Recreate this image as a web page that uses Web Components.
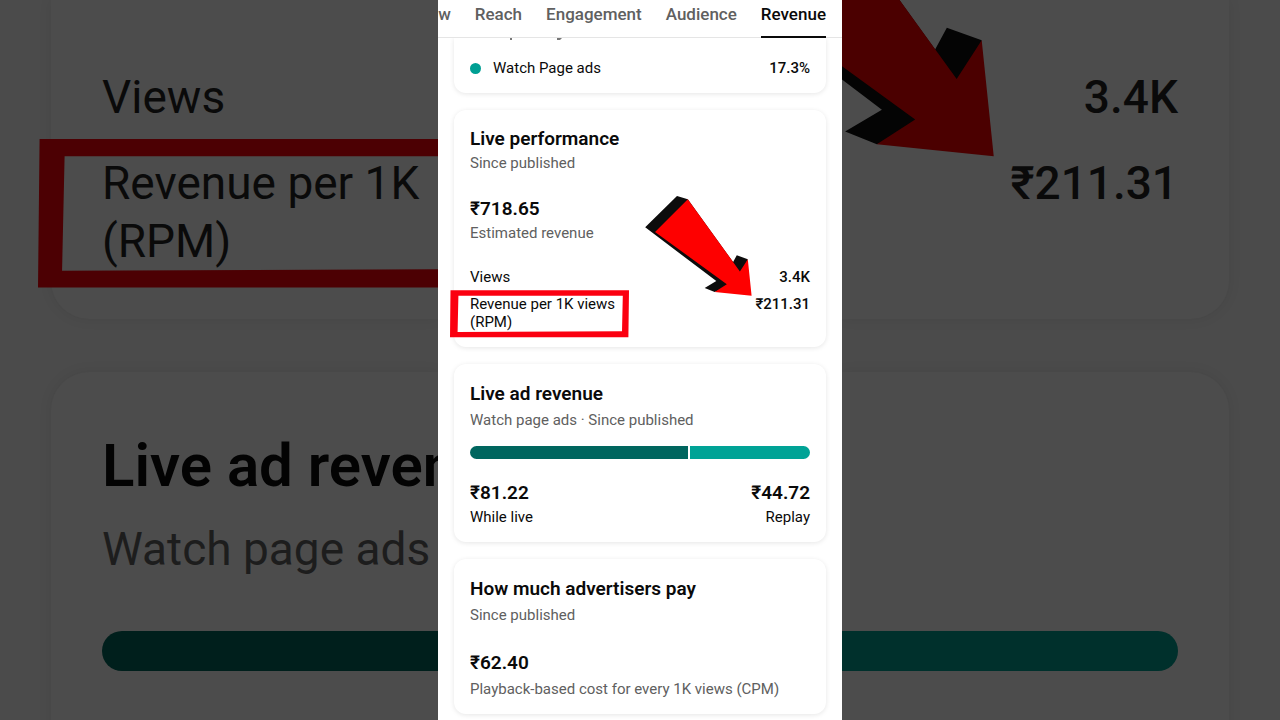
<!DOCTYPE html>
<html lang="en">
<head>
<meta charset="utf-8">
<meta name="viewport" content="width=device-width, initial-scale=1">
<title>Revenue analytics</title>
<style>
  html, body { margin: 0; height: 100%; }
  body { font-family: Roboto, "Noto Sans", sans-serif; background: #4b4b4b; color: #0a0a0a; overflow: hidden; }
</style>
</head>
<body>
<analytics-stage>
  <closeup-left aria-hidden="true"></closeup-left>
  <phone-screen>
    <tab-strip slot="tabs"></tab-strip>
    <metric-card variant="tail">
      <legend-row color="#009f93" value="17.3%">Watch Page ads</legend-row>
    </metric-card>
    <metric-card variant="dense" heading="Live performance" note="Since published">
      <big-figure variant="dense" value="₹718.65">Estimated revenue</big-figure>
      <detail-rows></detail-rows>
    </metric-card>
    <metric-card heading="Live ad revenue" note="Watch page ads · Since published">
      <revenue-split></revenue-split>
    </metric-card>
    <metric-card heading="How much advertisers pay" note="Since published">
      <big-figure value="₹62.40">Playback-based cost for every 1K views (CPM)</big-figure>
    </metric-card>
  </phone-screen>
  <closeup-right aria-hidden="true"></closeup-right>
</analytics-stage>

<script>
const define = (name, render) => customElements.define(name, class extends HTMLElement {
  connectedCallback() {
    if (this.shadowRoot) return;
    this.attachShadow({ mode: "open" }).innerHTML = render(this);
  }
});
const attr = (el, name) => el.getAttribute(name) || "";

/* Full-window stage: phone column between two dimmed close-up panels */
define("analytics-stage", () => `
  <style>
    :host { display: grid; grid-template: minmax(0, 1fr) / minmax(0, 1fr) 404px minmax(0, 1fr); height: 100vh; overflow: hidden; }
  </style>
  <slot></slot>`);

define("phone-screen", () => `
  <style>
    :host { display: block; background: #fff; overflow: hidden; }
    main { display: flex; flex-direction: column; gap: 17px; padding: 0 16px; }
  </style>
  <slot name="tabs"></slot><main><slot></slot></main>`);

define("tab-strip", () => `
  <style>
    :host { display: block; border-bottom: 1px solid #e5e5e5; height: 37px; }
    nav { display: flex; justify-content: flex-end; gap: 24px; padding-right: 16px; }
    a { flex: none; box-sizing: border-box; height: 38px; padding-top: 4px; font-size: 17px; line-height: 20px; font-weight: 500; color: #606060; text-decoration: none; border-bottom: 2px solid transparent; }
    a[aria-current] { color: #0a0a0a; border-color: #0a0a0a; }
  </style>
  <nav>
    <a href="#overview">Overview</a><a href="#reach">Reach</a><a href="#engagement">Engagement</a><a href="#audience">Audience</a><a href="#revenue" aria-current="page">Revenue</a>
  </nav>`);

define("metric-card", el => `
  <style>
    :host { display: block; background: #fff; border-radius: 12px; padding: 18px 16px 15px; box-shadow: 0 1px 5px rgba(0,0,0,.1); }
    :host([variant="dense"]) { padding: 17px 16px 16px; }
    :host([variant="tail"]) { padding: 0 16px 16px; border-radius: 0 0 12px 12px; clip-path: inset(0 -8px -8px); }
    h2 { margin: 0; font-size: 19px; line-height: 24px; font-weight: 600; }
    p { margin: 4px 0 0; font-size: 15px; line-height: 20px; color: #606060; }
    :host([variant="dense"]) p { margin-top: 2px; }
    svg { display: block; margin: 0 0 19px 39px; }
  </style>
  ${attr(el, "heading") ? `<h2>${attr(el, "heading")}</h2><p>${attr(el, "note")}</p>` : `
  <svg width="60" height="2" aria-hidden="true"><path d="M1 0H3V2H1ZM48 0H53L51 2H48Z" fill="#777"/></svg>`}
  <slot></slot>`);

define("legend-row", el => `
  <style>
    :host { display: flex; align-items: center; font-size: 15px; line-height: 18px; }
    i { width: 11px; height: 11px; border-radius: 50%; background: ${attr(el, "color")}; margin-right: 12px; }
    b { margin-left: auto; font-weight: 500; }
  </style>
  <i></i><span><slot></slot></span><b>${attr(el, "value")}</b>`);

define("big-figure", el => `
  <style>
    :host { display: block; margin-top: 26px; }
    strong { display: block; font-size: 19px; line-height: 24px; font-weight: 600; }
    span { display: block; margin-top: 4px; font-size: 15px; line-height: 20px; color: #606060; }
    :host([variant="dense"]) { margin-top: 24px; }
    :host([variant="dense"]) span { margin-top: 2px; }
  </style>
  <strong>${attr(el, "value")}</strong><span><slot></slot></span>`);

/* Hand-drawn style marker frame, scales with its host */
define("marker-frame", () => `
  <style>:host { display: block; } svg { display: block; width: 100%; height: 100%; }</style>
  <svg viewBox="450 290 180 48" preserveAspectRatio="none" aria-hidden="true">
    <path fill="var(--marker, #fb0010)" fill-rule="evenodd" d="M450.5 290.3H629L628.4 337.2H450ZM458.4 295.8L457.6 331.9 622 331.3 622.8 295.7Z"/>
  </svg>`);

define("marker-arrow", () => `
  <style>:host { display: block; } svg { display: block; width: 100%; height: 100%; }</style>
  <svg viewBox="645 196 107 100" aria-hidden="true">
    <path fill="var(--arrow-side, #0c0c0c)" d="M645.2 227.3L677 196 687.8 199.3 733.1 262.1 736.8 255.2 747.8 259.2 742 275 720 290 714.7 292 704.7 288 716.3 281.1Z"/>
    <path fill="var(--arrow, #fe0000)" d="M687.8 199.3L739.9 271.4 747.8 259.2 751.6 295.8 714.7 292 726.8 284.2 655 232Z"/>
  </svg>`);

define("detail-rows", () => `
  <style>
    :host { display: block; margin-top: 25px; position: relative; }
    dl { margin: 0; display: flex; flex-direction: column; gap: 9px; font-size: 15px; line-height: 18px; }
    div { display: flex; justify-content: space-between; }
    dt { max-width: 150px; }
    dd { margin: 0; font-weight: 500; }
    marker-frame { position: absolute; left: -20px; bottom: -7px; width: 180px; height: 48px; }
    marker-arrow { position: absolute; right: 58px; bottom: 35px; width: 107px; height: 100px; }
  </style>
  <dl>
    <div><dt>Views</dt><dd>3.4K</dd></div>
    <div><dt>Revenue per 1K views (RPM)</dt><dd>₹211.31</dd></div>
  </dl>
  <marker-frame></marker-frame><marker-arrow></marker-arrow>`);

define("revenue-split", () => `
  <style>
    :host { display: block; margin-top: 16px; }
    .bar { display: flex; gap: 2px; height: 13px; border-radius: 7px; overflow: hidden; }
    .live { flex: 218; background: #00665f; } .replay { flex: 120; background: #00a396; }
    .ends { display: flex; justify-content: space-between; margin-top: 22px; padding-bottom: 1px; }
    .ends div:last-child { text-align: right; }
    strong { display: block; font-size: 19px; line-height: 24px; font-weight: 600; }
    span { display: block; margin-top: 3px; font-size: 15px; line-height: 18px; }
  </style>
  <div class="bar"><div class="live"></div><div class="replay"></div></div>
  <div class="ends"><div><strong>₹81.22</strong><span>While live</span></div><div><strong>₹44.72</strong><span>Replay</span></div></div>`);

/* Shared look of the dimmed close-up panels; each shows one side of two tall cards */
const closeup = `
    :host { display: flex; flex-direction: column; gap: 53px; box-sizing: border-box; overflow: hidden; color: #0a0a0a;
      --marker: #4c0003; --arrow: #4b0000; --arrow-side: #040404; }
    section { position: relative; box-sizing: border-box; flex: none; padding: 0 51px; background: #4c4c4c; box-shadow: 0 0 14px rgba(0,0,0,.07); }
    .first { height: 319px; padding-top: 68px; display: flex; flex-direction: column; gap: 28px; font-size: 46px; line-height: 58px; }
    .second { height: 562px; padding-top: 56px; }
    .bar { height: 40px; }`;

define("closeup-left", () => `
  <style>${closeup}
    :host { padding-left: 51px; }
    section { padding-right: 0; white-space: nowrap; }
    .first { border-bottom-left-radius: 38px; }
    .second { border-top-left-radius: 38px; }
    h2 { margin: 0; font-size: 60px; line-height: 76px; font-weight: 600; color: #030303; }
    p { margin: 14px 0 0; font-size: 46px; line-height: 63px; color: #1d1d1d; }
    .bar { margin-top: 50px; background: #001f1c; border-radius: 20px 0 0 20px; }
    marker-frame { position: absolute; left: -13px; bottom: 29px; width: 570px; height: 152px; }
  </style>
  <section class="first">
    <div>Views</div>
    <div>Revenue per 1K<br>(RPM)</div>
    <marker-frame></marker-frame>
  </section>
  <section class="second">
    <h2>Live ad reven</h2>
    <p>Watch page ads</p>
    <div class="bar"></div>
  </section>`);

define("closeup-right", () => `
  <style>${closeup}
    :host { padding-right: 51px; }
    section { padding-left: 0; text-align: right; font-weight: 500; }
    .first { border-bottom-right-radius: 38px; }
    .second { border-top-right-radius: 38px; padding-top: 259px; }
    .bar { background: #00302c; border-radius: 0 20px 20px 0; }
    marker-arrow { position: absolute; right: 234px; bottom: 162px; width: 339px; height: 317px; }
  </style>
  <section class="first">
    <div>3.4K</div>
    <div>₹211.31</div>
    <marker-arrow></marker-arrow>
  </section>
  <section class="second"><div class="bar"></div></section>`);
</script>
</body>
</html>
